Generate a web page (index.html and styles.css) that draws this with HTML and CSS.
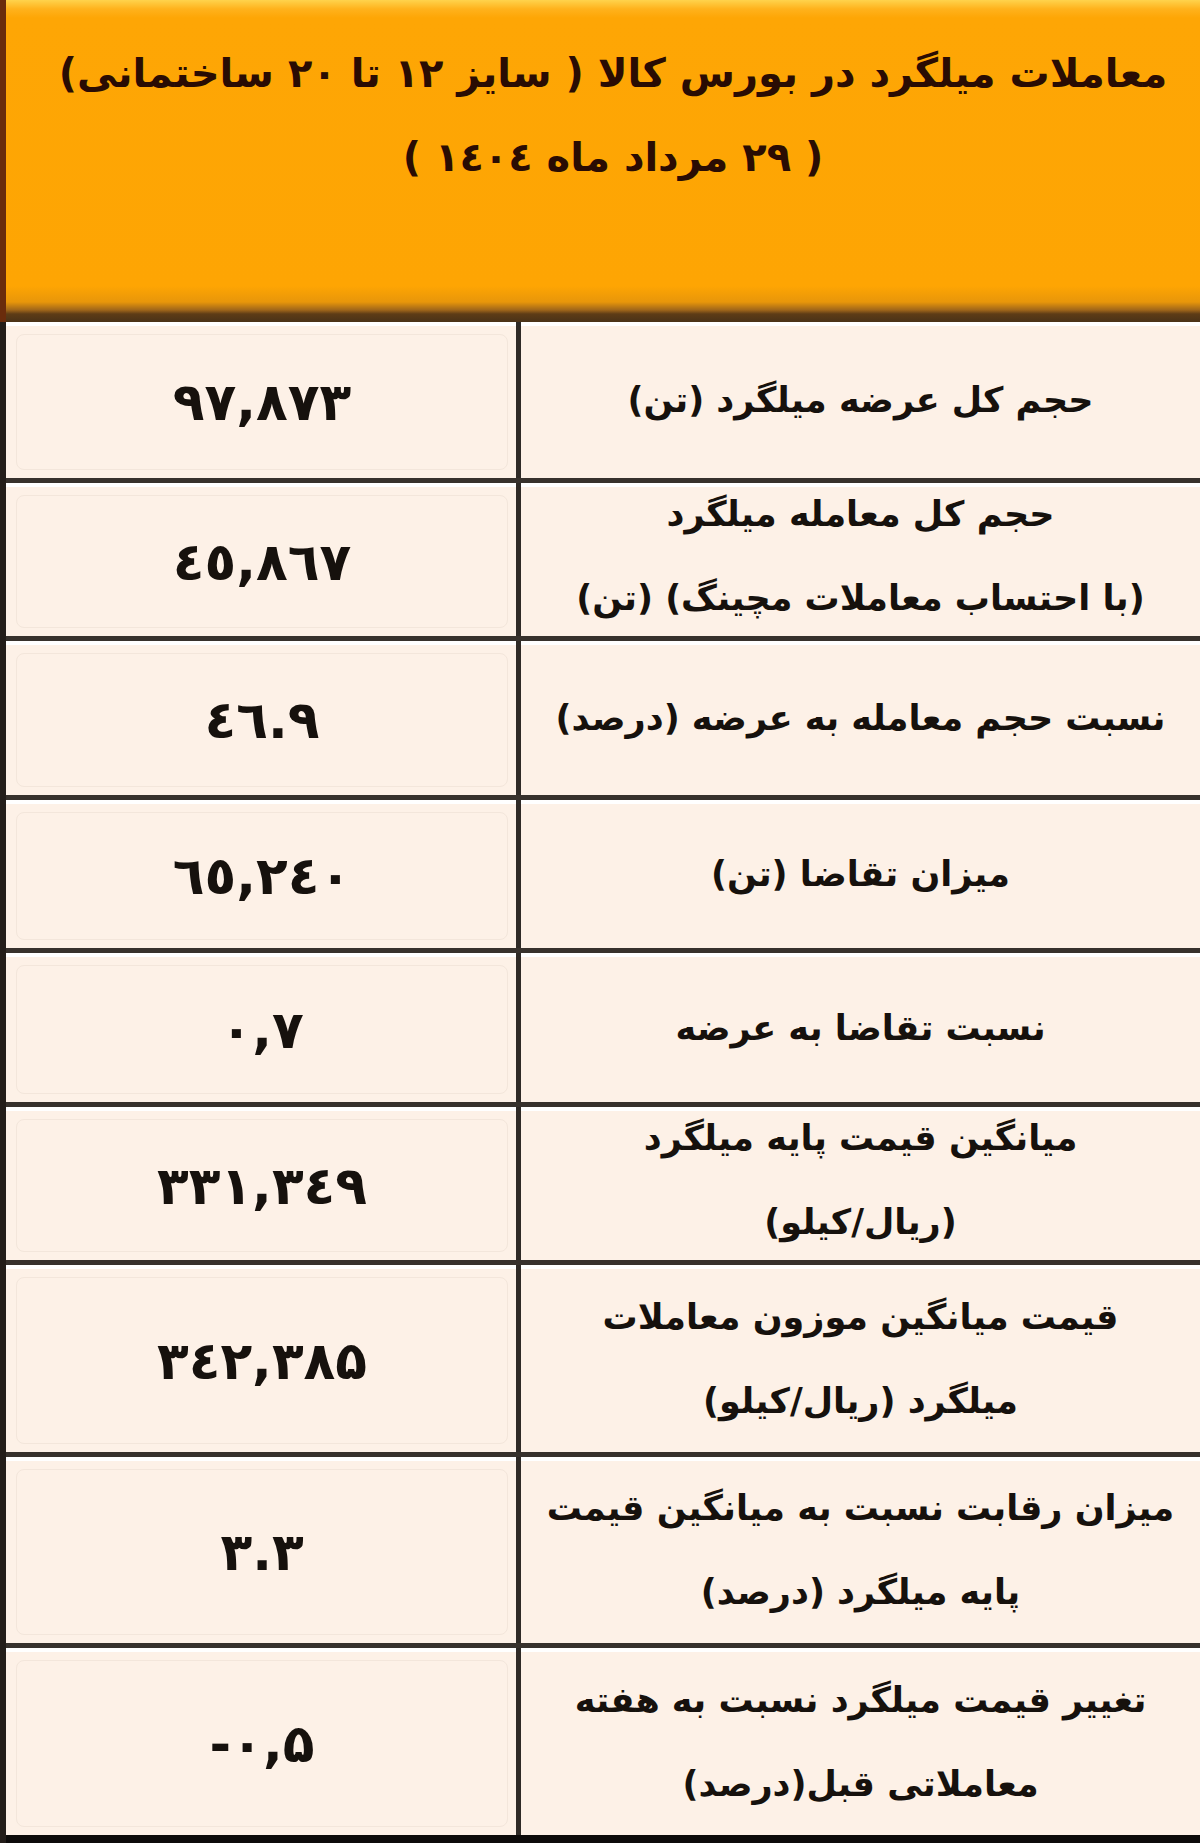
FILE: index.html
```html
<!DOCTYPE html>
<html lang="fa" dir="rtl">
<head>
<meta charset="utf-8">
<title>معاملات میلگرد</title>
<link rel="stylesheet" href="styles.css">
</head>
<body>
<div class="sheet">
  <header class="head">
    <h1 class="title">معاملات میلگرد در بورس کالا ( سایز ۱۲ تا ۲۰ ساختمانی)</h1>
    <p class="date">( ۲۹ مرداد ماه ۱٤۰٤ )</p>
  </header>
  <div class="table">
    <div class="row r1">
      <div class="label">حجم کل عرضه میلگرد (تن)</div>
      <div class="value"><span class="box"><bdi dir="ltr">٩٧,٨٧٣</bdi></span></div>
    </div>
    <div class="row r2">
      <div class="label lift">حجم کل معامله میلگرد<br>(با احتساب معاملات مچینگ) (تن)</div>
      <div class="value"><span class="box"><bdi dir="ltr">٤٥,٨٦٧</bdi></span></div>
    </div>
    <div class="row r3">
      <div class="label">نسبت حجم معامله به عرضه (درصد)</div>
      <div class="value"><span class="box"><bdi dir="ltr">٤٦.٩</bdi></span></div>
    </div>
    <div class="row r4">
      <div class="label">میزان تقاضا (تن)</div>
      <div class="value"><span class="box"><bdi dir="ltr">٦٥,٢٤٠</bdi></span></div>
    </div>
    <div class="row r5">
      <div class="label">نسبت تقاضا به عرضه</div>
      <div class="value"><span class="box"><bdi dir="ltr">٠,٧</bdi></span></div>
    </div>
    <div class="row r6">
      <div class="label lift">میانگین قیمت پایه میلگرد<br>(ریال/کیلو)</div>
      <div class="value"><span class="box"><bdi dir="ltr">٣٣١,٣٤٩</bdi></span></div>
    </div>
    <div class="row r7">
      <div class="label">قیمت میانگین موزون معاملات<br>میلگرد (ریال/کیلو)</div>
      <div class="value"><span class="box"><bdi dir="ltr">٣٤٢,٣٨۵</bdi></span></div>
    </div>
    <div class="row r8">
      <div class="label">میزان رقابت نسبت به میانگین قیمت<br>پایه میلگرد (درصد)</div>
      <div class="value"><span class="box"><bdi dir="ltr">٣.٣</bdi></span></div>
    </div>
    <div class="row r9">
      <div class="label">تغییر قیمت میلگرد نسبت به هفته<br>معاملاتی قبل(درصد)</div>
      <div class="value"><span class="box"><bdi dir="ltr">-٠,۵</bdi></span></div>
    </div>
  </div>
</div>
</body>
</html>
```
FILE: styles.css
```css
* {
  box-sizing: border-box;
  margin: 0;
  padding: 0;
}

html, body {
  margin: 0;
  background: #fdf1e7;
}

body {
  font-family: "DejaVu Sans", "Noto Sans", sans-serif;
  color: #16110d;
}

.sheet {
  width: 1200px;
  height: 1843px;
  display: flex;
  flex-direction: column;
  overflow: hidden;
}

.head {
  height: 322px;
  flex: none;
  display: flex;
  flex-direction: column;
  align-items: center;
  padding-top: 31px;
  padding-left: 20px;
  border-left: 6px solid #6a2c0c;
  color: #2a0c03;
  background: linear-gradient(180deg,
    #ffd34c 0px,
    #ffb21c 9px,
    #fea605 18px,
    #fea503 286px,
    #e8960a 302px,
    #a0661a 310px,
    #5e3c16 314px,
    #4a3218 322px);
}

.title,
.date {
  font-size: 40px;
  font-weight: bold;
  line-height: 84px;
  white-space: nowrap;
  letter-spacing: -1px;
}

.table {
  flex: 1;
  display: flex;
  flex-direction: column;
  border-left: 6px solid #231d19;
  background: #fdf1e7;
}

.row {
  display: grid;
  grid-template-columns: 1fr 510px;
  grid-template-rows: minmax(0, 1fr);
  border-bottom: 5px solid #37312c;
  flex: none;
}

.r1 { height: 161px; }
.r2 { height: 158px; }
.r3 { height: 159px; }
.r4 { height: 153px; }
.r5 { height: 154px; }
.r6 { height: 158px; }
.r7 { height: 192px; }
.r8 { height: 191px; }
.r9 {
  flex: 1;
  border-bottom: 8px solid #0d0b0a;
}

.label,
.value {
  box-shadow: inset 0 4px 0 #ffffff;
  min-height: 0;
}

.label {
  display: flex;
  align-items: center;
  justify-content: center;
  text-align: center;
  border-left: 5px solid #2f2a26;
  font-size: 35px;
  font-weight: bold;
  line-height: 84px;
  letter-spacing: -0.5px;
}

.label.lift {
  padding-bottom: 8px;
}

.value {
  padding: 12px 8px 8px 10px;
  display: flex;
}

.box {
  flex: 1;
  display: flex;
  align-items: center;
  justify-content: center;
  border: 1px solid #f3e6db;
  border-radius: 8px;
  font-size: 52px;
  font-weight: bold;
}
```
